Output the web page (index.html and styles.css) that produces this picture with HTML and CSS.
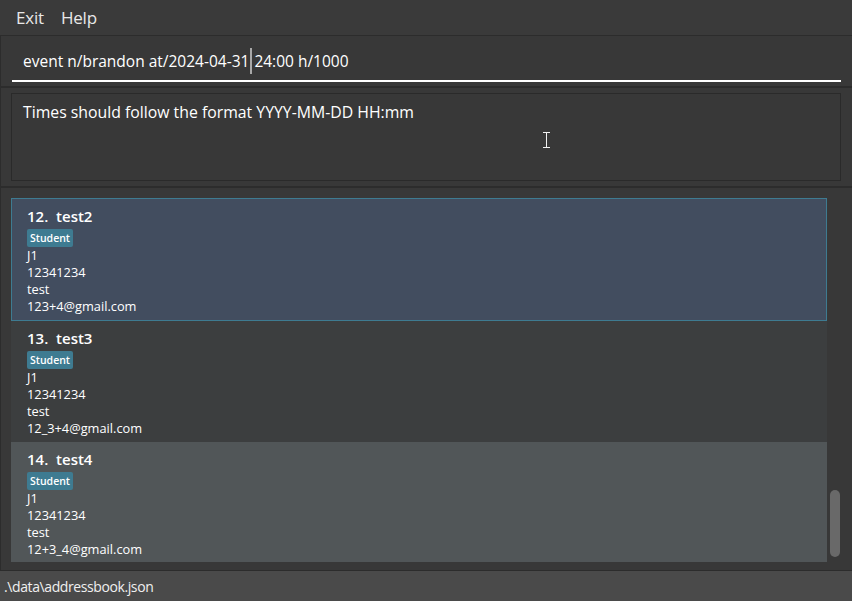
FILE: index.html
```html
<!DOCTYPE html>
<html>
<head>
<meta charset="utf-8">
<link rel="stylesheet" href="styles.css">
</head>
<body>
<div class="app">
  <div class="menubar">
    <span class="menu-item">Exit</span>
    <span class="menu-item">Help</span>
  </div>
  <div class="command-pane">
    <div class="command-field"><span>event n/brandon at/2024-04-31</span><span class="caret"></span><span>24:00 h/1000</span></div>
  </div>
  <div class="result-pane">
    <div class="result-box">
      <div class="result-text">Times should follow the format YYYY-MM-DD HH:mm</div>
      <div class="ibeam"><svg width="9" height="16" viewBox="0 0 9 16"><path d="M1 0.5H8M1 15.5H8M4.5 0.5V15.5" stroke="#f0f0f0" stroke-width="1" fill="none"/></svg></div>
    </div>
  </div>
  <div class="list-pane">
    <div class="list">
      <div class="card selected">
        <div class="name">12.&nbsp;&nbsp;test2</div>
        <div class="tags"><span class="tag">Student</span></div>
        <div class="field">J1</div>
        <div class="field">12341234</div>
        <div class="field">test</div>
        <div class="field">123+4@gmail.com</div>
      </div>
      <div class="card even">
        <div class="name">13.&nbsp;&nbsp;test3</div>
        <div class="tags"><span class="tag">Student</span></div>
        <div class="field">J1</div>
        <div class="field">12341234</div>
        <div class="field">test</div>
        <div class="field">12_3+4@gmail.com</div>
      </div>
      <div class="card odd">
        <div class="name">14.&nbsp;&nbsp;test4</div>
        <div class="tags"><span class="tag">Student</span></div>
        <div class="field">J1</div>
        <div class="field">12341234</div>
        <div class="field">test</div>
        <div class="field">12+3_4@gmail.com</div>
      </div>
    </div>
    <div class="scrolltrack"><div class="thumb"></div></div>
  </div>
  <div class="statusbar">.\data\addressbook.json</div>
</div>
</body>
</html>
```
FILE: styles.css
```css
html, body {
  margin: 0;
  padding: 0;
  background: #383838;
}
.app {
  width: 852px;
  height: 601px;
  display: flex;
  flex-direction: column;
  font-family: "Open Sans", "Noto Sans", sans-serif;
  color: #ffffff;
  overflow: hidden;
}
.menubar {
  height: 36px;
  box-sizing: border-box;
  display: flex;
  align-items: center;
  padding: 0 0 1px 16px;
  gap: 17px;
  background: #3a3a3a;
  border-bottom: 1px solid #2c2c2c;
  flex: none;
}
.menu-item {
  font-size: 17px;
  color: #e8e8e8;
  letter-spacing: -0.2px;
}
.command-pane {
  height: 52px;
  box-sizing: border-box;
  padding: 0 11px 0 11px;
  background: #383838;
  border-bottom: 2px solid #2c2c2c;
  border-left: 1px solid #2c2c2c;
  flex: none;
  display: flex;
  align-items: flex-end;
}
.command-field {
  flex: 1;
  height: 40px;
  box-sizing: border-box;
  border-bottom: 2px solid #ffffff;
  padding: 0 0 0 11px;
  margin-bottom: 4px;
  display: flex;
  align-items: center;
  font-size: 15.5px;
  color: #ffffff;
  white-space: pre;
}
.caret {
  display: inline-block;
  width: 2px;
  height: 26px;
  background: #a8a8a8;
  margin: 0 2px 0 1px;
}
.result-pane {
  height: 100px;
  box-sizing: border-box;
  padding: 5px 11px 5px 10px;
  background: #383838;
  border-bottom: 2px solid #2c2c2c;
  border-left: 1px solid #2c2c2c;
  flex: none;
}
.result-box {
  position: relative;
  height: 88px;
  box-sizing: border-box;
  border: 1px solid #2a2a2a;
  padding: 7px 11px;
}
.result-text {
  font-size: 15.8px;
  color: #ffffff;
}
.ibeam {
  position: absolute;
  left: 530px;
  top: 38px;
  line-height: 0;
}
.list-pane {
  height: 382px;
  box-sizing: border-box;
  padding: 10px 2px 8px 10px;
  background: #383838;
  border-left: 1px solid #2c2c2c;
  flex: none;
  display: flex;
  gap: 2px;
}
.list {
  width: 816px;
  display: flex;
  flex-direction: column;
}
.card {
  box-sizing: border-box;
  padding: 7px 0 0 16px;
  flex: none;
}
.card.selected {
  height: 123px;
  background: #424d5f;
  border: 1px solid #3e7b91;
  padding: 7px 0 0 15px;
}
.card.even {
  background: #3c3e3f;
  height: 121px;
}
.card.odd {
  background: #515658;
  height: 120px;
}
.name {
  font-size: 15px;
  font-weight: 600;
  line-height: 20px;
  color: #ffffff;
}
.tags {
  display: flex;
  margin: 3px 0 0;
}
.tag {
  background: #3e7b91;
  color: #ffffff;
  font-size: 10.5px;
  font-weight: 600;
  line-height: 18px;
  padding: 0 3px;
  border-radius: 2px;
}
.field {
  font-size: 12.8px;
  line-height: 17px;
  color: #ffffff;
}
.scrolltrack {
  width: 12px;
  flex: none;
  position: relative;
}
.thumb {
  position: absolute;
  left: 1px;
  top: 292px;
  width: 10px;
  height: 67px;
  border-radius: 5px;
  background: #696969;
}
.statusbar {
  flex: 1;
  box-sizing: border-box;
  background: #4a4a4a;
  border-top: 1px solid #2c2c2c;
  padding: 6px 0 0 4px;
  font-size: 14px;
  color: #f0f0f0;
  letter-spacing: -0.4px;
}
```
